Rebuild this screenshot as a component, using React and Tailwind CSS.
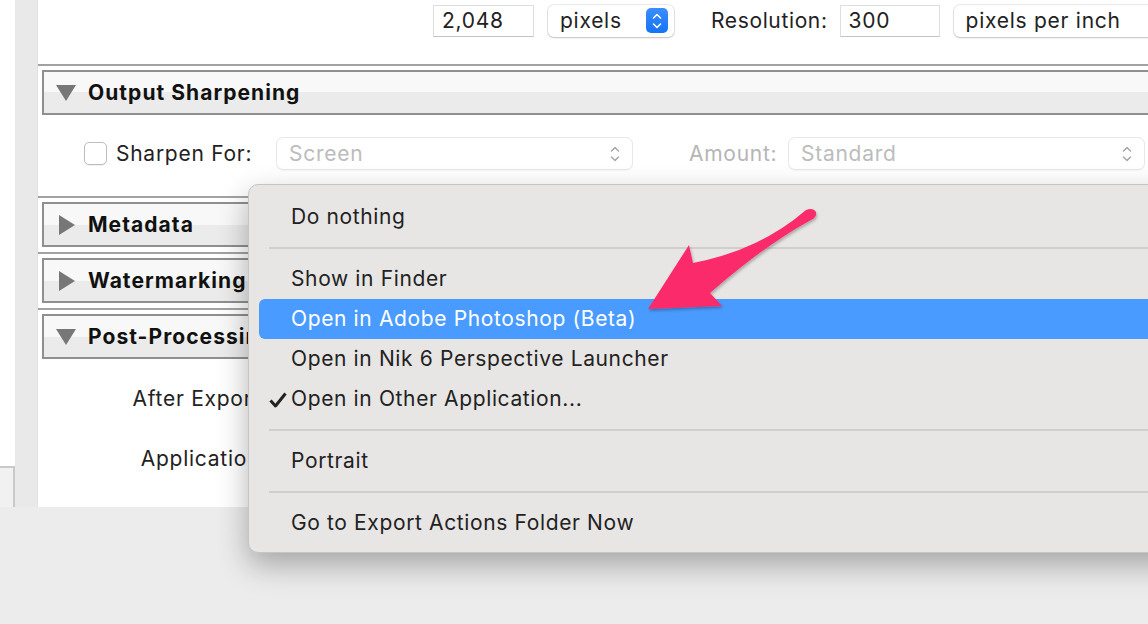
import { useState } from 'react'

const menuItems = [
  { type: 'item', label: 'Do nothing' },
  { type: 'sep' },
  { type: 'item', label: 'Show in Finder' },
  { type: 'item', label: 'Open in Adobe Photoshop (Beta)', active: true },
  { type: 'item', label: 'Open in Nik 6 Perspective Launcher' },
  { type: 'item', label: 'Open in Other Application...', checked: true },
  { type: 'sep' },
  { type: 'item', label: 'Portrait' },
  { type: 'sep' },
  { type: 'item', label: 'Go to Export Actions Folder Now' },
]

function Disclosure({ open }) {
  return open ? (
    <svg width="22" height="18" viewBox="0 0 22 18" className="shrink-0">
      <path d="M1 1 L21 1 L11 17 Z" fill="#777" />
    </svg>
  ) : (
    <svg width="18" height="22" viewBox="0 0 18 22" className="shrink-0">
      <path d="M1 1 L17 11 L1 21 Z" fill="#777" />
    </svg>
  )
}

function SectionHeader({ title, open }) {
  return (
    <>
      <div className="h-[2px] bg-[#a2a2a2]" />
      <div className="ml-[4px] mt-[4px] flex h-[45px] items-center border-2 border-r-0 border-[#8f8f8f] bg-[linear-gradient(to_bottom,#f8f8f8_50%,#ebebeb_50%)]">
        <div className={open ? 'ml-[11px] w-[33px]' : 'ml-[14px] w-[30px]'}>
          <Disclosure open={open} />
        </div>
        <span className="whitespace-nowrap text-[21px] font-bold tracking-[0.05em] text-[#111]">{title}</span>
      </div>
    </>
  )
}

function Chevrons({ color = '#a9a9a9' }) {
  return (
    <svg width="10" height="18" viewBox="0 0 10 18" fill="none" stroke={color} strokeWidth="1.6" strokeLinecap="round" strokeLinejoin="round">
      <path d="M1.5 6 L5 2.5 L8.5 6" />
      <path d="M1.5 12 L5 15.5 L8.5 12" />
    </svg>
  )
}

function TextField({ value, width }) {
  return (
    <div
      className="flex h-[32px] shrink-0 items-center border border-[#dedede] border-b-[#c4c4c4] bg-white pl-[8px] text-[21px] tracking-[0.035em] text-[#222]"
      style={{ width }}
    >
      {value}
    </div>
  )
}

function PopUp({ value, width, stepper }) {
  return (
    <div
      className="flex h-[32px] shrink-0 items-center justify-between rounded-[6px] bg-white pl-[12px] pr-[6px] text-[21px] tracking-[0.035em] text-[#222] shadow-[0_0_0_1px_rgba(0,0,0,0.08),0_1px_2px_rgba(0,0,0,0.18)]"
      style={{ width }}
    >
      <span className="whitespace-nowrap">{value}</span>
      {stepper && (
        <span className="flex h-[25px] w-[22px] items-center justify-center rounded-[5px] bg-[linear-gradient(#3b8efc,#1573f6)]">
          <Chevrons color="#fff" />
        </span>
      )}
    </div>
  )
}

function DisabledPopUp({ value, width }) {
  return (
    <div
      className="flex h-[33px] shrink-0 items-center justify-between rounded-[7px] border border-[#e8e8e8] bg-white pl-[12px] pr-[12px] text-[21px] tracking-[0.035em] text-[#bcbcbc] shadow-[0_1px_1px_rgba(0,0,0,0.04)]"
      style={{ width }}
    >
      <span>{value}</span>
      <Chevrons />
    </div>
  )
}

function Menu() {
  return (
    <div className="absolute left-[248px] top-[184px] w-[960px] rounded-[10px] border border-[#c7c5c3] bg-[#e7e6e4] pb-[9px] pt-[12px] shadow-[0_12px_30px_rgba(0,0,0,0.3)]">
      {menuItems.map((item, i) =>
        item.type === 'sep' ? (
          <div key={i} className="flex h-[22px] items-center pl-[20px]">
            <div className="h-[2px] w-full bg-[#d1cfcd]" />
          </div>
        ) : (
          <div
            key={i}
            className={
              'relative mx-[10px] flex h-[40px] items-center whitespace-nowrap rounded-[6px] pl-[32px] text-[21px] tracking-[0.03em] ' +
              (item.active ? 'bg-[#4a9bff] text-white' : 'text-[#222]')
            }
          >
            {item.checked && (
              <svg className="absolute left-[10px] top-[13px]" width="18" height="16" viewBox="0 0 18 16">
                <path d="M1.5 8.5 L6.5 14 L16.5 1.5" fill="none" stroke="#222" strokeWidth="3" strokeLinejoin="round" />
              </svg>
            )}
            {item.label}
          </div>
        )
      )}
    </div>
  )
}

function Arrow() {
  return (
    <svg className="pointer-events-none absolute left-0 top-0" width="1148" height="624">
      <defs>
        <filter id="sh" x="-20%" y="-20%" width="140%" height="140%">
          <feDropShadow dx="1" dy="2" stdDeviation="1.5" floodColor="#000" floodOpacity="0.28" />
        </filter>
      </defs>
      <path
        d="M648 309 L689 245 L693 263 Q760 250 806 210 Q813 207 816 212 Q817 217 811 220 Q765 245 710 293 L722 306 Z"
        fill="#fb2b6b"
        filter="url(#sh)"
      />
    </svg>
  )
}

export default function App() {
  const [checked] = useState(false)

  return (
    <div className="relative h-[624px] w-[1148px] overflow-hidden bg-[#ececec] font-['Inter','Liberation_Sans',sans-serif]">
      <div className="flex h-[507px]">
        {/* left list edge */}
        <div className="flex w-[15px] shrink-0 flex-col">
          <div className="flex-1 bg-white" />
          <div className="h-[41px] border-r-2 border-t-2 border-[#c9c9c9] bg-[#f1f1f1]" />
        </div>
        <div className="w-[22px] shrink-0 bg-[#e9e9e9]" />

        {/* export settings panel */}
        <div className="min-w-0 flex-1 overflow-hidden border-l border-[#e2e2e2] bg-white">
          <div className="flex h-[40px] items-center pl-[395px] pt-[1px]">
            <TextField value="2,048" width={101} />
            <div className="ml-[14px] shrink-0">
              <PopUp value="pixels" width={126} stepper />
            </div>
            <span className="ml-[37px] shrink-0 text-[21px] tracking-[0.03em] text-[#222]">Resolution:</span>
            <div className="ml-[12px] shrink-0">
              <TextField value="300" width={100} />
            </div>
            <div className="ml-[14px] shrink-0">
              <PopUp value="pixels per inch" width={230} />
            </div>
          </div>

          <div className="mt-[24px]">
            <SectionHeader title="Output Sharpening" open />
            <div className="flex h-[81px] items-center pb-[4px] pl-[46px]">
              <div
                className={
                  'h-[23px] w-[23px] shrink-0 rounded-[5px] border border-[#bdbdbd] bg-white shadow-[0_1px_1px_rgba(0,0,0,0.06)] ' +
                  (checked ? 'bg-[#1a7dfb]' : '')
                }
              />
              <span className="ml-[9px] w-[160px] shrink-0 whitespace-nowrap text-[21px] tracking-[0.035em] text-[#222]">Sharpen For:</span>
              <DisabledPopUp value="Screen" width={357} />
              <span className="ml-[56px] w-[99px] shrink-0 text-[21px] tracking-[0.035em] text-[#b5b5b5]">Amount:</span>
              <DisabledPopUp value="Standard" width={357} />
            </div>

            <SectionHeader title="Metadata" />
            <div className="h-[5px]" />
            <SectionHeader title="Watermarking" />
            <div className="h-[5px]" />
            <SectionHeader title="Post-Processing" open />

            <div className="mt-[20px] flex h-[40px] items-center">
              <span className="w-[229px] whitespace-nowrap text-right text-[21px] tracking-[0.035em] text-[#222]">After Export:</span>
            </div>
            <div className="mt-[20px] flex h-[40px] items-center">
              <span className="w-[229px] whitespace-nowrap text-right text-[21px] tracking-[0.035em] text-[#222]">Application:</span>
            </div>
          </div>
        </div>
      </div>

      <Menu />
      <Arrow />
    </div>
  )
}
